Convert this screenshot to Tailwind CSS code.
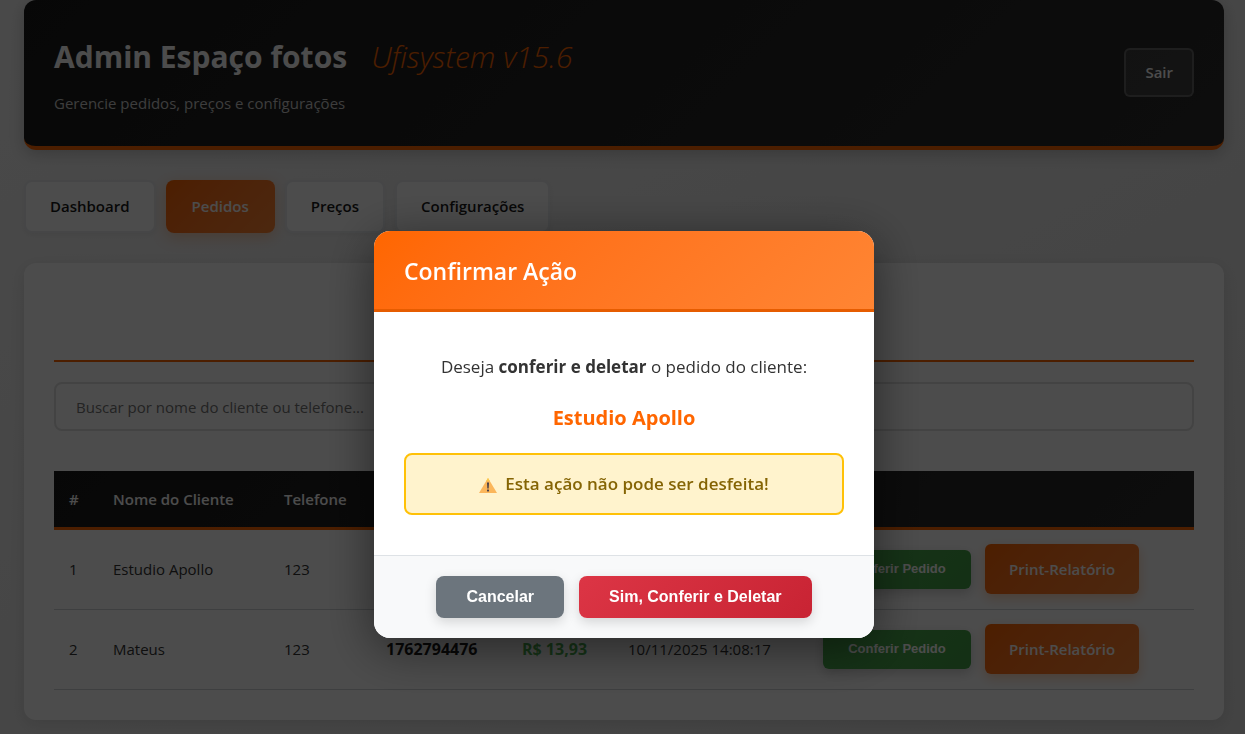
<!DOCTYPE html>
<html lang="pt-BR">
<head>
<meta charset="utf-8">
<meta name="viewport" content="width=device-width, initial-scale=1">
<title>Admin Espaço fotos</title>
<script src="https://cdn.jsdelivr.net/npm/@tailwindcss/browser@4"></script>
</head>
<body class="min-h-screen overflow-hidden bg-linear-to-br from-[#f5f5f5] to-[#e0e0e0] pr-[21px] pb-4 pl-6 font-['Open_Sans',sans-serif] text-[15px] text-[#333333]">
  <header class="flex items-center justify-between rounded-xl border-b-4 border-[#ff6600] bg-linear-135 from-[#1a1a1a] to-[#2d2d2d] px-[30px] pt-[30px] pb-[31px] shadow-[0_4px_15px_rgba(0,0,0,0.2)]">
    <div class="pt-[5px]">
      <h1 class="flex items-center gap-6 text-[30px] leading-11 font-bold text-white">Admin Espaço fotos <span class="font-light text-[#ff6600] italic">Ufisystem v15.6</span></h1>
      <p class="mt-3 leading-6 text-[#cccccc]">Gerencie pedidos, preços e configurações</p>
    </div>
    <button type="button" class="h-[49px] rounded-md border-2 border-white/20 bg-white/10 px-[19px] text-[15px] font-semibold text-white">Sair</button>
  </header>

  <nav class="mt-[30px] flex gap-[10px] text-[15px] font-semibold">
    <button type="button" class="h-[53px] rounded-lg border-2 border-[#e9ecef] bg-white px-6 text-[#1a1a1a] shadow-[0_2px_5px_rgba(0,0,0,0.05)]">Dashboard</button>
    <button type="button" class="h-[53px] rounded-lg border-2 border-transparent bg-linear-135 from-[#ff6600] to-[#ff8533] bg-origin-border px-6 text-white shadow-[0_4px_15px_rgba(255,102,0,0.3)]">Pedidos</button>
    <button type="button" class="h-[53px] rounded-lg border-2 border-[#e9ecef] bg-white px-6 text-[#1a1a1a] shadow-[0_2px_5px_rgba(0,0,0,0.05)]">Preços</button>
    <button type="button" class="h-[53px] rounded-lg border-2 border-[#e9ecef] bg-white px-6 text-[#1a1a1a] shadow-[0_2px_5px_rgba(0,0,0,0.05)]">Configurações</button>
  </nav>

  <main class="mt-[30px] rounded-xl bg-white p-[30px] shadow-[0_4px_15px_rgba(0,0,0,0.1)]">
    <div class="h-[69px] border-b-2 border-[#ff6600]"></div>
    <input type="text" aria-label="Buscar pedidos" placeholder="Buscar por nome do cliente ou telefone..." class="mt-5 h-[49px] w-full rounded-lg border-2 border-[#e0e0e0] px-5 text-[15px] placeholder:text-[#757575]">
    <table class="mt-10 w-full table-fixed border-collapse text-left">
      <colgroup>
        <col class="w-11"><col class="w-[171px]"><col class="w-[102px]"><col class="w-[136px]"><col class="w-[106px]"><col class="w-[195px]"><col>
      </colgroup>
      <thead class="bg-linear-135 from-[#1a1a1a] to-[#2d2d2d] text-white">
        <tr class="h-[57px] border-b-3 border-[#ff6600]">
          <th class="px-[15px] font-semibold">#</th>
          <th class="px-[15px] font-semibold">Nome do Cliente</th>
          <th class="px-[15px] font-semibold">Telefone</th>
          <th></th>
          <th></th>
          <th></th>
          <th></th>
        </tr>
      </thead>
      <tbody>
        <tr class="h-[81px] border-b border-[#cfd3d6]">
          <td class="px-[15px]">1</td>
          <td class="px-[15px]">Estudio Apollo</td>
          <td class="px-[15px]">123</td>
          <td></td><td></td><td></td>
          <td class="px-[15px]">
            <div class="flex items-center gap-[14px]">
              <button type="button" class="h-[39px] w-37 rounded-md bg-linear-135 from-[#4caf50] to-[#43a047] font-['Liberation_Sans',sans-serif] text-[13px] font-bold text-white shadow-[0_4px_12px_rgba(0,0,0,0.2)]">Conferir Pedido</button>
              <button type="button" class="h-[50px] rounded-md bg-linear-135 from-[#ff6600] to-[#ff8533] px-6 text-[15px] font-semibold text-white shadow-[0_4px_12px_rgba(255,102,0,0.3)]">Print-Relatório</button>
            </div>
          </td>
        </tr>
        <tr class="h-[80px] border-b border-[#cfd3d6]">
          <td class="px-[15px]">2</td>
          <td class="px-[15px]">Mateus</td>
          <td class="px-[15px]">123</td>
          <td class="px-[15px] text-base font-bold text-[#1a1a1a]">1762794476</td>
          <td class="px-[15px] text-base font-bold text-[#4caf50]">R$ 13,93</td>
          <td class="px-[15px]">10/11/2025 14:08:17</td>
          <td class="px-[15px]">
            <div class="flex items-center gap-[14px]">
              <button type="button" class="h-[39px] w-37 rounded-md bg-linear-135 from-[#4caf50] to-[#43a047] font-['Liberation_Sans',sans-serif] text-[13px] font-bold text-white shadow-[0_4px_12px_rgba(0,0,0,0.2)]">Conferir Pedido</button>
              <button type="button" class="h-[50px] rounded-md bg-linear-135 from-[#ff6600] to-[#ff8533] px-6 text-[15px] font-semibold text-white shadow-[0_4px_12px_rgba(255,102,0,0.3)]">Print-Relatório</button>
            </div>
          </td>
        </tr>
      </tbody>
    </table>
  </main>

  <div class="fixed inset-0 flex items-center justify-center bg-black/70 pt-[135px] pr-[21px] pl-6">
    <section role="dialog" aria-modal="true" aria-labelledby="dialog-title" class="w-full max-w-[500px] overflow-hidden rounded-2xl bg-white shadow-[0_10px_50px_rgba(0,0,0,0.5)]">
      <div class="border-b-3 border-[#e65c00] bg-linear-135 from-[#ff6600] to-[#ff8533] px-[30px] pt-[22px] pb-5">
        <h3 id="dialog-title" class="text-[23px] leading-9 font-semibold text-white">Confirmar Ação</h3>
      </div>
      <div class="px-[30px] py-10 text-center">
        <p class="text-[17px] leading-[30px]">Deseja <strong class="font-bold">conferir e deletar</strong> o pedido do cliente:</p>
        <p class="mt-5 text-xl leading-[31px] font-bold text-[#ff6600]">Estudio Apollo</p>
        <p class="mt-5 flex h-[62px] items-center justify-center gap-2 rounded-lg border-2 border-[#ffc107] bg-[#fff3cd] text-[17px] font-semibold text-[#856404]">
          <svg class="mt-1 size-[18px]" viewBox="0 0 18 18" aria-hidden="true">
            <path d="M9 1 18 16H0Z" fill="#fbb65b"/>
            <path d="M9 1 10.8 4H7.2Z" fill="#fcc94a"/>
            <path d="M8 5.5h2l-.3 6H8.3Z" fill="#4a4048"/>
            <rect x="8" y="12.5" width="2" height="2" rx=".4" fill="#4a4048"/>
          </svg>
          Esta ação não pode ser desfeita!
        </p>
      </div>
      <div class="flex justify-center gap-[15px] border-t border-[#dee2e6] bg-[#f8f9fa] py-5 font-['Liberation_Sans',sans-serif] text-base font-bold text-white">
        <button type="button" class="h-[42px] rounded-lg bg-[#6c757d] px-[30px] shadow-[0_4px_12px_rgba(0,0,0,0.15)]">Cancelar</button>
        <button type="button" class="h-[42px] rounded-lg bg-linear-135 from-[#dc3545] to-[#c82333] px-[30px] shadow-[0_4px_12px_rgba(0,0,0,0.15)]">Sim, Conferir e Deletar</button>
      </div>
    </section>
  </div>
</body>
</html>
